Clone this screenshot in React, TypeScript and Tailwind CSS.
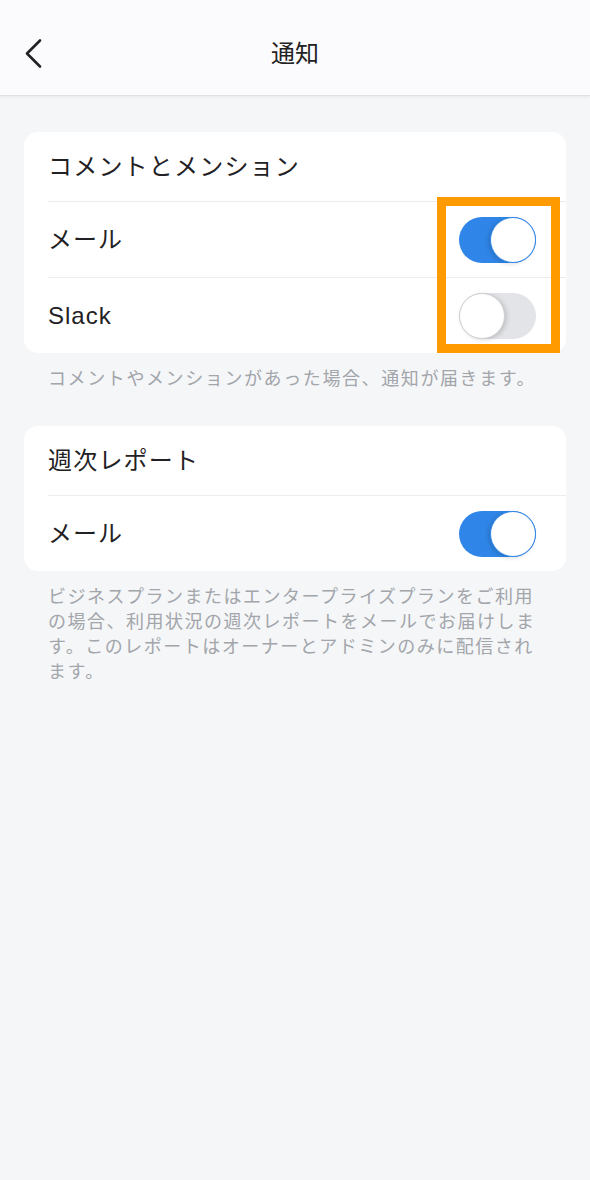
const font = { fontFamily: '"Liberation Sans", "Noto Sans CJK JP", sans-serif' };

function Toggle({ on }: { on: boolean }) {
  return (
    <div
      className={
        'relative w-[77px] h-[46px] rounded-full flex items-center ' +
        (on ? 'bg-[#2f86e8] justify-end' : 'bg-[#e3e4e7] justify-start')
      }
    >
      <div
        className={
          'w-[46px] h-[46px] rounded-full bg-white border ' +
          (on
            ? 'border-[#2f86e8] shadow-[-2px_1px_4px_rgba(0,0,0,0.15)]'
            : 'border-[#cfd0d3] shadow-[2px_1px_4px_rgba(0,0,0,0.15)]')
        }
      />
    </div>
  );
}

function Row({ label, on }: { label: string; on: boolean }) {
  return (
    <div className="ml-[24px] border-t border-[#ececef]">
      <div className="h-[75px] flex items-center justify-between pr-[30px]">
        <span className="text-[24px] tracking-[1px] text-[#1f2124]">{label}</span>
        <Toggle on={on} />
      </div>
    </div>
  );
}

export default function App() {
  return (
    <div className="min-h-screen bg-[#f5f6f8]" style={font}>
      {/* Header */}
      <header className="relative h-[96px] bg-[#fbfbfd] border-b border-[#dedfe2] shadow-[0_1px_3px_rgba(0,0,0,0.06)] flex items-center justify-center">
        <svg className="absolute left-[22px] top-[38px]" width="24" height="32" viewBox="0 0 24 32">
          <polyline points="18,2.5 5,15.5 18,28.5" fill="none" stroke="#222" strokeWidth="2.6" strokeLinecap="round" strokeLinejoin="round" />
        </svg>
        <h1 className="text-[24px] text-[#222] pt-[12px]">通知</h1>
      </header>

      <main className="px-[24px] pt-[36px]">
        {/* コメントとメンション */}
        <div className="relative bg-white rounded-[14px]">
          <div className="h-[69px] flex items-center pl-[24px]">
            <span className="text-[24px] tracking-[1.2px] text-[#1f2124]">コメントとメンション</span>
          </div>
          <Row label="メール" on={true} />
          <Row label="Slack" on={false} />
          <div className="absolute left-[413px] top-[65px] w-[123px] h-[156px] border-[9px] border-[#ff9a00]" />
        </div>
        <p className="pt-[14px] pl-[24px] text-[18px] leading-[25px] tracking-[1.6px] text-[#a2a5aa]">
          コメントやメンションがあった場合、通知が届きます。
        </p>

        {/* 週次レポート */}
        <div className="mt-[34px] bg-white rounded-[14px]">
          <div className="h-[69px] flex items-center pl-[24px]">
            <span className="text-[24px] tracking-[1.2px] text-[#1f2124]">週次レポート</span>
          </div>
          <Row label="メール" on={true} />
        </div>
        <p className="pt-[14px] pl-[24px] pr-[24px] text-[18px] leading-[25px] tracking-[1.5px] text-[#a2a5aa]">
          ビジネスプランまたはエンタープライズプランをご利用の場合、利用状況の週次レポートをメールでお届けします。このレポートはオーナーとアドミンのみに配信されます。
        </p>
      </main>
    </div>
  );
}
